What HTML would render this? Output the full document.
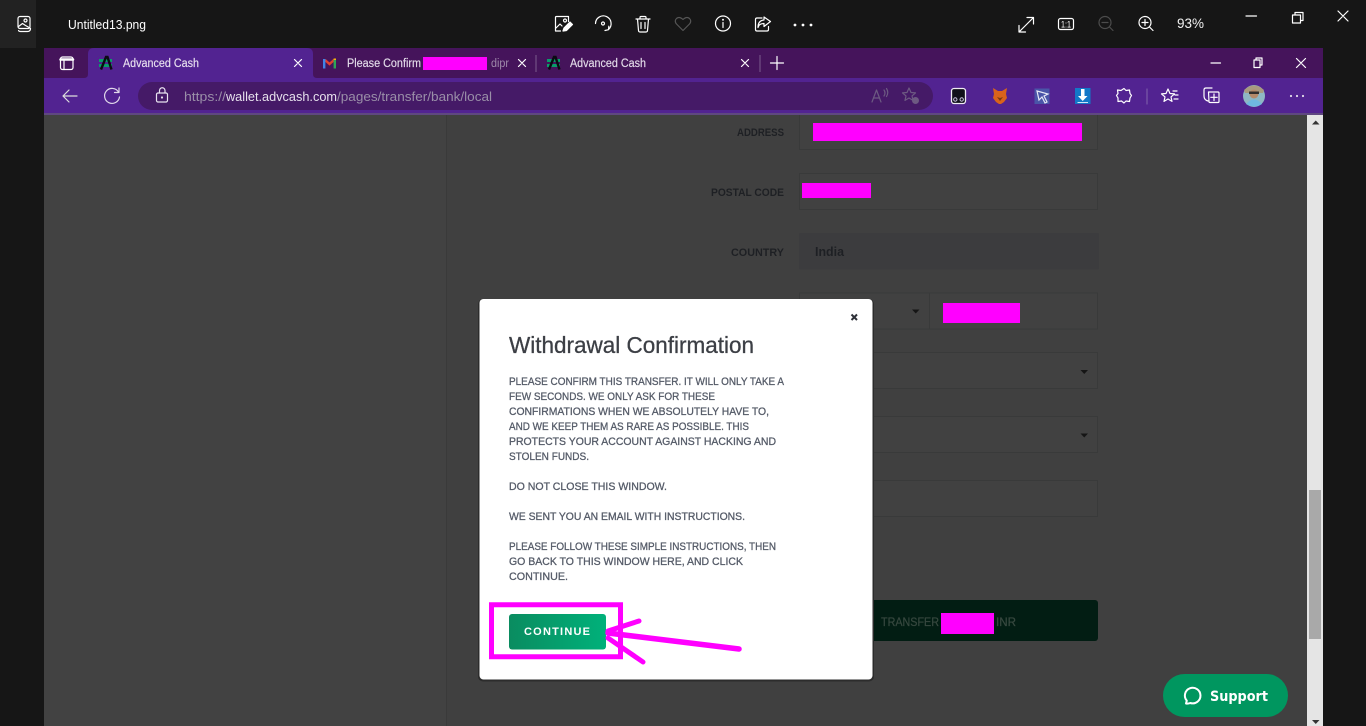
<!DOCTYPE html>
<html lang="en"><head><meta charset="utf-8"><title>Untitled13.png</title>
<style>
html,body{margin:0;padding:0;background:#161616;width:1366px;height:726px;overflow:hidden}
svg{display:block;position:absolute;left:0;top:0}
text{font-family:"Liberation Sans",sans-serif}
</style></head><body>
<svg width="1366" height="726" viewBox="0 0 1366 726" xmlns="http://www.w3.org/2000/svg">
<defs><linearGradient id="g" x1="0" x2="1" y1="0" y2="0"><stop offset="0" stop-color="#0a8c60"/><stop offset="1" stop-color="#00b17a"/></linearGradient></defs>
<rect width="1366" height="726" fill="#161616"/>
<rect width="36" height="48" fill="#222"/>
<!-- viewer top bar -->
<g fill="none" stroke="#fff" stroke-width="1.2" stroke-linecap="round" stroke-linejoin="round">
<rect x="18" y="16.500" width="12" height="12" rx="2"/>
<path d="M18.500 30.500q.5 1 2 1h7q3 0 3-3" />
<circle cx="25.500" cy="20.500" r="1.500"/><path d="M18.500 26.500l4-3 3 2 4.500 2.500"/>
<path d="M555.500 31V17.500q0-1 1-1h12v5M555.500 31h5"/><circle cx="565" cy="20.500" r="1.500"/><path d="M556 28l4-4 2 2"/>
<path d="M563 31l1-3 6-6 2.500 2.500-6 6z" fill="#fff"/>
<path d="M595.500 24.500a7.800 7.800 0 1 1 13 6M605 31.500l3.500-.8.300-3.500" transform="translate(0 -1)"/><circle cx="603" cy="23.500" r="1.500"/>
<path d="M636 19h14M640 19v-1.500q0-1 1-1h4q1 0 1 1V19M637.500 19l1 11.500q.1 1.500 1.500 1.500h6q1.400 0 1.500-1.500l1-11.500M641 22.500v6M645 22.500v6"/>
<path stroke="#555" d="M683 30.500l-6.500-6.500q-2.500-3 0-5.500 2.800-2.500 6.500 1 3.700-3.500 6.500-1 2.500 2.500 0 5.500z"/>
<circle cx="723" cy="23.500" r="7.500"/><path d="M723 22.500v5"/><circle cx="723" cy="19.800" r=".4" fill="#fff"/>
<path d="M762 18h-5q-1.500 0-1.500 1.500v10q0 1.500 1.500 1.500h10q1.500 0 1.500-1.500v-3M764 17l6.500 4.500-6.500 5v-3q-5 0-6 4 0-7 6-7.500z"/>
<path d="M1019 32l14-14M1027 17.500h6.500v6.500M1019 25.500V32h6.500"/>
<rect x="1058.500" y="18.500" width="15" height="11" rx="2"/>
<g stroke="#4c4c4c"><circle cx="1105" cy="22.500" r="6"/><path d="M1109.500 27l3.500 3.500M1102 22.500h6"/></g>
<circle cx="1145" cy="22.500" r="6"/><path d="M1149.500 27l3.500 3.500M1142 22.500h6M1145 19.500v6"/>
<path d="M1246 16h10.500M1292.500 15h8v8h-8zM1295 15v-2.500h8v8h-2.500M1338 11l10 10M1348 11l-10 10"/>
</g>
<g fill="#fff"><circle cx="795" cy="25" r="1.400"/><circle cx="803" cy="25" r="1.400"/><circle cx="811" cy="25" r="1.400"/></g>
<text x="1061" y="27.500" font-size="9.500" fill="#fff" textLength="10" lengthAdjust="spacingAndGlyphs">1:1</text>
<text x="68" y="29" font-size="13" fill="#fff" textLength="78" lengthAdjust="spacingAndGlyphs">Untitled13.png</text>
<text x="1177" y="28" font-size="14" fill="#f2f2f2" textLength="27" lengthAdjust="spacingAndGlyphs">93%</text>

<!-- browser chrome -->
<rect x="44" y="48" width="1279" height="30" fill="#45145b"/>
<rect x="44" y="78" width="1279" height="36" fill="#522391"/>
<path d="M84 78q4 0 4-4V54q0-6 6-6h213q6 0 6 6v20q0 4 4 4z" fill="#522391"/>
<rect x="44" y="113" width="1279" height="2" fill="#5f4880"/>
<rect x="138" y="82" width="795" height="28" rx="14" fill="#451a67"/>
<g fill="none" stroke="#fff" stroke-width="1.200" stroke-linecap="round" stroke-linejoin="round">
<rect x="60.500" y="57" width="12.500" height="12.500" rx="2"/><path d="M60.500 59.500h12.500" stroke-width="2.500"/><path d="M64 60.500v9"/>
<path d="M294.500 59.500l7 7M301.500 59.500l-7 7M518.500 59.500l7 7M525.500 59.500l-7 7M741.500 59.500l7 7M748.500 59.500l-7 7"/>
<path d="M770.500 63h13M777 56.500v13"/>
<path d="M1211 63h9.500M1254 60h6v7.500h-6zM1256 60v-2h6v7h-2M1296.500 58.500l9 9M1305.500 58.500l-9 9"/>
<path d="M77 96H63M69 90l-6 6 6 6" stroke="#ddd"/>
<path d="M118.500 92a7.500 7.500 0 1 0 1 5M119 88v4.500h-4.500" stroke="#e0d8ea"/>
<rect x="156.500" y="93" width="11" height="9" rx="1.500" stroke="#e8e2ef"/><path d="M159.500 93v-2.500a2.700 2.700 0 0 1 5.500 0V93" stroke="#e8e2ef"/><circle cx="162" cy="97.500" r=".5" fill="#e8e2ef" stroke="#e8e2ef"/>
<path d="M1147 89v15" stroke="#7a5aa8"/>
<path d="M1124 88.500l2 2 3.500-.5.500 3.500 1.500 2-1.500 2.500-.5 3.500-3.500-.5-2 2-2.500-2-3.500.5v-3.500l-1.500-2.500 1.500-2-.500-3.500 3.500.5z"/>
<path d="M1168 89l2 4.500 4.500.4-3.500 3 1 4.500-4-2.400-4 2.400 1-4.500-3.500-3 4.500-.4zM1173 91h4M1175 95h3M1174 99h4"/>
<path d="M1204 96v-6q0-2 2-2h6M1208.500 92h9.500q1 0 1 1v8.500q0 1-1 1h-8q-1 0-1-1zM1204 96q0 4 4 5"/><path d="M1214 94v6.500M1210.800 97.300h6.400"/>
<path stroke="#6d5a82" d="M872 102l4.500-12 4.500 12M873.500 98h6M884 90q2 3 0 6M886.500 88.500q2.500 4 0 8"/>
<path stroke="#6d5a82" d="M909 88l2 4.500 4.500.4-3.500 3 1 4.500-4-2.400-4 2.400 1-4.500-3.500-3 4.500-.4z"/><circle cx="915.500" cy="100.500" r="3.500" fill="#6d5a82" stroke="none"/>
</g>
<g fill="#e2dcea"><circle cx="1291" cy="96" r="1.100"/><circle cx="1297" cy="96" r="1.100"/><circle cx="1303" cy="96" r="1.100"/></g>
<rect x="535.500" y="55" width="1" height="17" fill="#7a5b8c"/><rect x="759.500" y="55" width="1" height="17" fill="#7a5b8c"/>

<!-- favicons -->
<g><path d="M99 60.500h13M99 65.500h13" stroke="#0a9c6a" stroke-width="3"/><path d="M101 69.500l5-12.500h1.500l4 12.500" stroke="#0b0b12" stroke-width="2.400" fill="none"/></g>
<g transform="translate(448 0)"><path d="M99 60.500h13M99 65.500h13" stroke="#0a9c6a" stroke-width="3"/><path d="M101 69.500l5-12.500h1.500l4 12.500" stroke="#0b0b12" stroke-width="2.400" fill="none"/></g>
<path d="M325 60l4.500 4 4.500-4" fill="none" stroke="#e0402e" stroke-width="2.400"/>
<path d="M324.200 68.500V59" stroke="#3f83e6" stroke-width="2.400"/><path d="M334.800 68.500V59" stroke="#2ea556" stroke-width="2.400"/><path d="M334.800 60v-1.500" stroke="#f2b70a" stroke-width="2.400"/>
<g stroke-width=".15">
<text x="123" y="67" font-size="11.500" fill="#e8e0ef" stroke="#e8e0ef" textLength="76" lengthAdjust="spacingAndGlyphs">Advanced Cash</text>
<text x="347" y="67" font-size="11.500" fill="#e3dbe9" stroke="#e3dbe9" textLength="74" lengthAdjust="spacingAndGlyphs">Please Confirm</text>
<text x="570" y="67" font-size="11.500" fill="#e3dbe9" stroke="#e3dbe9" textLength="76" lengthAdjust="spacingAndGlyphs">Advanced Cash</text>
</g>
<rect x="423" y="57" width="64" height="13" fill="#f0f"/>
<text x="491" y="67" font-size="11.500" fill="#9e8aaa" textLength="18" lengthAdjust="spacingAndGlyphs">dipr</text>
<text x="184" y="101" font-size="13" fill="#9a8fa8" textLength="42" lengthAdjust="spacingAndGlyphs">https://</text>
<text x="226" y="101" font-size="13" fill="#e6e0ec" textLength="111" lengthAdjust="spacingAndGlyphs">wallet.advcash.com</text>
<text x="337" y="101" font-size="13" fill="#9a8fa8" textLength="155" lengthAdjust="spacingAndGlyphs">/pages/transfer/bank/local</text>

<!-- extensions -->
<rect x="951.500" y="88.500" width="14" height="15" rx="2.500" fill="#10101a" stroke="#efeaf4" stroke-width="1.300"/>
<circle cx="955.300" cy="99.500" r="1.700" fill="none" stroke="#c9bfe0"/><circle cx="961.700" cy="99.500" r="1.700" fill="none" stroke="#c9bfe0"/>
<path d="M993 88l5 3h4l5-3-1 6 1 4-3 4-3 2h-2l-3-2-3-4 1-4z" fill="#d9631a"/><path d="M997 97l3 4 3-4-3 1z" fill="#7a3a10"/>
<rect x="1034.500" y="88.500" width="15" height="15.500" fill="#4a55a8"/><path d="M1037 91l11 3-4 2 3 6-2 1-3-6-3 3z" fill="none" stroke="#e6e8f5" stroke-width="1.200"/>
<rect x="1075" y="88" width="15.500" height="16" fill="#1378c8"/><path d="M1081 89h3.500v7h3l-4.800 5-4.700-5h3z" fill="#fff"/><path d="M1077.500 102.500h10.500" stroke="#cfe6f8" stroke-width="1"/>
<circle cx="1254" cy="96" r="11" fill="#8fb7c4"/><path d="M1244 90q10-9 20 0l-1 3h-18z" fill="#a89a80"/><circle cx="1254" cy="94" r="4.500" fill="#b48a6a"/><rect x="1249" y="91.500" width="10" height="2.500" fill="#33302e"/><path d="M1246 104q8-9 16 0q-8 5-16 0z" fill="#6fb9e0"/>

<!-- page -->
<rect x="44" y="115" width="1263" height="611" fill="#404040"/>
<rect x="44" y="115" width="402" height="611" fill="#424242"/>
<rect x="446" y="115" width="1" height="611" fill="#3a3a3a"/>
<g fill="#414141" stroke="#393a3a" stroke-width="1">
<path d="M799.500 115v34.500h298V115"/>
<rect x="799.500" y="173.500" width="298" height="36"/>
<rect x="799.500" y="293" width="298" height="36"/>
<path d="M929.500 293v36" fill="none"/>
<rect x="799.500" y="352.500" width="298" height="36"/>
<rect x="799.500" y="416.500" width="298" height="36"/>
<rect x="799.500" y="480.500" width="298" height="36"/>
</g>
<rect x="799" y="233" width="300" height="36.500" rx="1.500" fill="#3c3c3e"/>
<g fill="#1e2024" font-weight="bold">
<text x="737" y="136" font-size="11" textLength="47" lengthAdjust="spacingAndGlyphs">ADDRESS</text>
<text x="711" y="196" font-size="11" textLength="73" lengthAdjust="spacingAndGlyphs">POSTAL CODE</text>
<text x="731" y="256" font-size="11" textLength="53" lengthAdjust="spacingAndGlyphs">COUNTRY</text>
<text x="815" y="256" font-size="12.500" textLength="29" lengthAdjust="spacingAndGlyphs">India</text>
</g>
<g fill="#f0f"><rect x="813" y="123" width="269" height="18"/><rect x="802" y="183" width="69" height="15"/><rect x="943" y="303" width="77" height="20"/></g>
<g fill="#151515"><path d="M912 309.500h7.500l-3.750 4z"/><path d="M1080.500 370h7.500l-3.750 4z"/><path d="M1080.500 433.500h7.500l-3.750 4z"/></g>
<rect x="800" y="600" width="298" height="41" rx="3" fill="#021d13"/>
<text x="881" y="626" font-size="12" fill="#37483f" stroke="#37483f" stroke-width=".25" textLength="58" lengthAdjust="spacingAndGlyphs">TRANSFER</text>
<rect x="941" y="613" width="53" height="21" fill="#f0f"/>
<text x="996" y="626" font-size="12" fill="#37483f" stroke="#37483f" stroke-width=".25" textLength="20" lengthAdjust="spacingAndGlyphs">INR</text>

<!-- scrollbar -->
<rect x="1307" y="115" width="16" height="611" fill="#e5e5e5"/>
<rect x="1309" y="490" width="12" height="149" fill="#a9a9a9"/>
<path d="M1312 124.500h7.500l-3.750-4z" fill="#333"/><path d="M1312 720h7.500l-3.750 4z" fill="#333"/>

<!-- support -->
<rect x="1163" y="674" width="125" height="43" rx="21.500" fill="#00965f"/>
<path d="M1186 703.500l.8-2.800a7.800 7.800 0 1 1 3.500 2.300q-2 .8-4.300.5z" fill="none" stroke="#fff" stroke-width="2" stroke-linejoin="round"/>
<text x="1210" y="701" font-size="14" font-weight="bold" fill="#fff" textLength="58" style="font-family:'DejaVu Sans',sans-serif" lengthAdjust="spacingAndGlyphs">Support</text>

<!-- modal -->
<rect x="478" y="299" width="396" height="382.500" rx="5" fill="#2c2c2c"/>
<rect x="479.500" y="299" width="393" height="380.500" rx="4" fill="#fff"/>
<path d="M851.500 314.500l5.500 5.500M857 314.500l-5.500 5.500" stroke="#2e3138" stroke-width="2"/>
<text x="509" y="353" font-size="23" fill="#3c3f45" stroke="#3c3f45" stroke-width=".3" textLength="245" lengthAdjust="spacingAndGlyphs">Withdrawal Confirmation</text>
<g font-size="11.300" fill="#555b68" stroke="#555b68" stroke-width=".3">
<text x="509" y="385" textLength="275" lengthAdjust="spacingAndGlyphs">PLEASE CONFIRM THIS TRANSFER. IT WILL ONLY TAKE A</text>
<text x="509" y="400" textLength="206" lengthAdjust="spacingAndGlyphs">FEW SECONDS. WE ONLY ASK FOR THESE</text>
<text x="509" y="415" textLength="260" lengthAdjust="spacingAndGlyphs">CONFIRMATIONS WHEN WE ABSOLUTELY HAVE TO,</text>
<text x="509" y="430" textLength="240" lengthAdjust="spacingAndGlyphs">AND WE KEEP THEM AS RARE AS POSSIBLE. THIS</text>
<text x="509" y="445" textLength="267" lengthAdjust="spacingAndGlyphs">PROTECTS YOUR ACCOUNT AGAINST HACKING AND</text>
<text x="509" y="460" textLength="80" lengthAdjust="spacingAndGlyphs">STOLEN FUNDS.</text>
<text x="509" y="490" textLength="158" lengthAdjust="spacingAndGlyphs">DO NOT CLOSE THIS WINDOW.</text>
<text x="509" y="520" textLength="236" lengthAdjust="spacingAndGlyphs">WE SENT YOU AN EMAIL WITH INSTRUCTIONS.</text>
<text x="509" y="550" textLength="267" lengthAdjust="spacingAndGlyphs">PLEASE FOLLOW THESE SIMPLE INSTRUCTIONS, THEN</text>
<text x="509" y="565" textLength="234" lengthAdjust="spacingAndGlyphs">GO BACK TO THIS WINDOW HERE, AND CLICK</text>
<text x="509" y="580" textLength="59" lengthAdjust="spacingAndGlyphs">CONTINUE.</text>
</g>
<rect x="509" y="614" width="97" height="35.500" rx="3" fill="url(#g)"/>
<text x="524" y="635" font-size="11" font-weight="bold" fill="#fff" textLength="66">CONTINUE</text>
<path d="M491.500 604.800h129v52h-129z" fill="none" stroke="#f0f" stroke-width="5"/>
<g stroke="#f0f" fill="none" stroke-linecap="round"><path d="M608 633l131 16" stroke-width="5.500"/><path d="M608 631l31-10" stroke-width="5"/><path d="M608 638l35 24" stroke-width="5"/></g>
</svg>
</body></html>
